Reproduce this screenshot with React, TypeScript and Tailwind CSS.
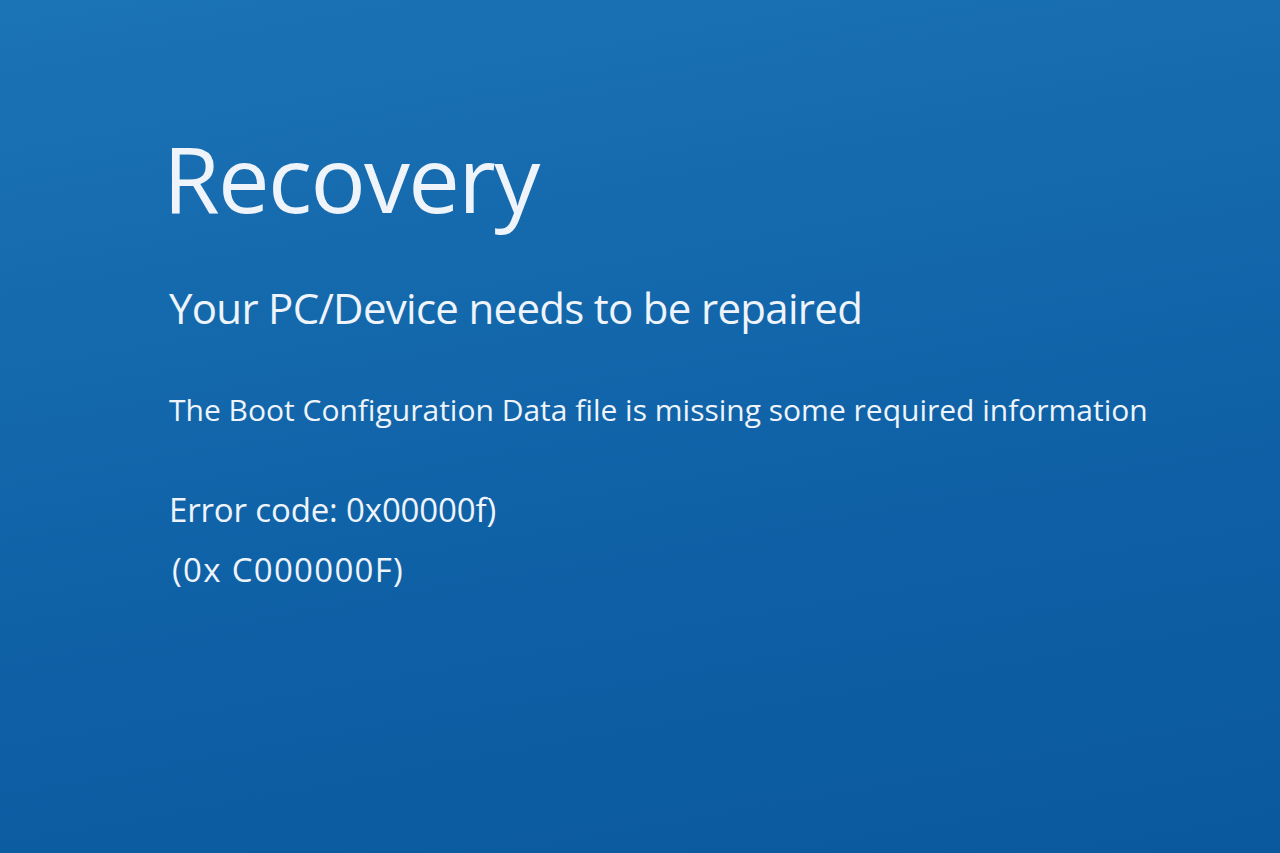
export default function App() {
  return (
    <main
      className="w-[1280px] h-[853px] overflow-hidden bg-[linear-gradient(170deg,#1b74b6_0%,#1468ac_35%,#0d5ea4_70%,#0a599e_100%)] text-[#eef4fa]"
      style={{ fontFamily: '"Open Sans", "Noto Sans", sans-serif' }}
    >
      <section className="flex flex-col pl-[163px] pt-[118px]">
        <h1 className="text-[92px] leading-[120px] font-normal tracking-[-1.7px]">Recovery</h1>
        <h2 className="mt-[40px] ml-[6px] text-[42px] leading-[60px] font-normal tracking-[-0.7px]">
          Your PC/Device needs to be repaired
        </h2>
        <p className="mt-[50px] ml-[6px] text-[30px] leading-[44px]">
          The Boot Configuration Data file is missing some required information
        </p>
        <p className="mt-[54px] ml-[6px] text-[33px] leading-[48px] tracking-[-0.15px]">Error code: 0x00000f)</p>
        <p className="mt-[12px] ml-[9px] text-[33px] leading-[48px] tracking-[1.3px]">(0x C000000F)</p>
      </section>
    </main>
  );
}
